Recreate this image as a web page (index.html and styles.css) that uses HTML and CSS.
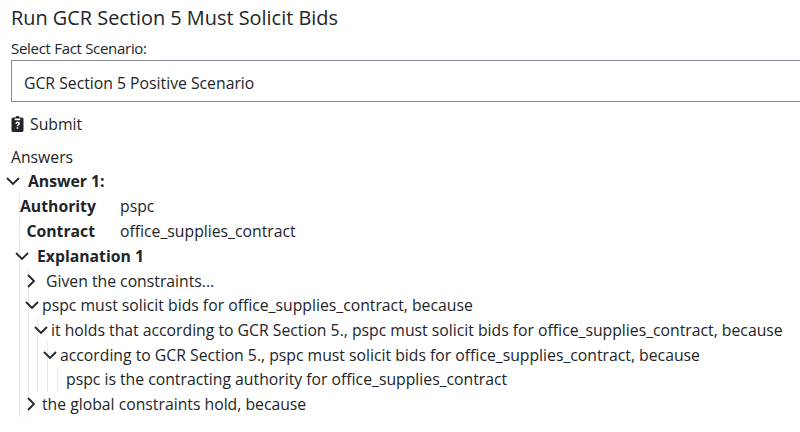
FILE: index.html
```html
<!DOCTYPE html>
<html lang="en">
<head>
  <meta charset="UTF-8">
  <title>Run GCR Section 5 Must Solicit Bids</title>
  <link rel="stylesheet" href="styles.css">
</head>
<body>
  <div class="page">
    <h1>Run GCR Section 5 Must Solicit Bids</h1>
    <label class="field-label">Select Fact Scenario:</label>
    <div class="select">GCR Section 5 Positive Scenario</div>
    <button type="button" class="submit">
      <svg class="submit-icon" viewBox="0 0 12 16"><path fill-rule="evenodd" d="M4 1.500C4 .6 4.900 0 6 0s2 .6 2 1.500h2.200c1 0 1.800.8 1.800 1.800v10.900c0 1-.8 1.800-1.800 1.800H1.800C.8 16 0 15.200 0 14.200V3.300c0-1 .8-1.800 1.800-1.800H4zM3.200 2.600v1.600h5.600V2.600H3.200zM4 8h1.500c0-.8.300-1.100.6-1.100s.6.200.6.600c0 .4-.2.600-.6.900-.6.400-.9.900-.9 1.800h1.500c0-.5.100-.7.600-1 .7-.5 1-1.100 1-1.800 0-1.200-.9-1.900-2.200-1.900C4.800 5.500 4 6.500 4 8zM5.200 11.300v1.500h1.600v-1.500H5.200z"/></svg>
      Submit
    </button>
    <div class="answers-label">Answers</div>

    <div class="tree-row answer-head">
      <svg class="chev" viewBox="0 0 14 14"><path d="M1 4l6 6 6-6"/></svg>
      <strong>Answer 1:</strong>
    </div>
    <div class="branch answer-body">
      <dl class="facts">
        <dt>Authority</dt><dd>pspc</dd>
        <dt>Contract</dt><dd>office_supplies_contract</dd>
      </dl>
      <div class="tree-row explanation-head">
        <svg class="chev" viewBox="0 0 14 14"><path d="M1 4l6 6 6-6"/></svg>
        <strong>Explanation 1</strong>
      </div>
      <div class="branch explanation-body">
        <div class="tree-row given">
          <svg class="chev" viewBox="0 0 14 14"><path d="M4 1l6 6-6 6"/></svg>
          <span>Given the constraints...</span>
        </div>
        <div class="tree-row node">
          <svg class="chev" viewBox="0 0 14 14"><path d="M1 4l6 6 6-6"/></svg>
          <span>pspc must solicit bids for office_supplies_contract, because</span>
        </div>
        <div class="branch level">
          <div class="tree-row node">
            <svg class="chev" viewBox="0 0 14 14"><path d="M1 4l6 6 6-6"/></svg>
            <span>it holds that according to GCR Section 5., pspc must solicit bids for office_supplies_contract, because</span>
          </div>
          <div class="branch level inner">
            <div class="tree-row node">
              <svg class="chev" viewBox="0 0 14 14"><path d="M1 4l6 6 6-6"/></svg>
              <span>according to GCR Section 5., pspc must solicit bids for office_supplies_contract, because</span>
            </div>
            <div class="branch leaf">
              <div class="tree-row">pspc is the contracting authority for office_supplies_contract</div>
            </div>
          </div>
        </div>
        <div class="tree-row node closed">
          <svg class="chev" viewBox="0 0 14 14"><path d="M4 1l6 6-6 6"/></svg>
          <span>the global constraints hold, because</span>
        </div>
      </div>
    </div>
  </div>
</body>
</html>
```

FILE: styles.css
```css
* {
  box-sizing: border-box;
}

html,
body {
  margin: 0;
  height: 432px;
  overflow: hidden;
}

body {
  font-family: 'Open Sans', 'Noto Sans', sans-serif;
  font-size: 15.75px;
  color: #212529;
  background: #fff;
}

.page {
  padding: 5px 0 0 11px;
  width: 820px;
}

h1 {
  margin: 0;
  font-size: 19.9px;
  font-weight: 400;
  line-height: 26px;
}

.field-label {
  display: block;
  margin-top: 6px;
  font-size: 15px;
  letter-spacing: -0.3px;
  line-height: 23px;
}

.select {
  height: 42px;
  padding-left: 12px;
  border: 1px solid #8a8d98;
  line-height: 44px;
}

.submit {
  display: flex;
  align-items: center;
  gap: 6px;
  margin: 10px 0 0;
  padding: 0;
  border: none;
  background: none;
  color: inherit;
  font: inherit;
  line-height: 24px;
}

.submit-icon {
  width: 13px;
  height: 16px;
  fill: #212529;
}

.answers-label {
  margin-top: 9px;
  line-height: 24px;
}

.tree-row {
  display: flex;
  align-items: center;
  height: 24.7px;
  white-space: nowrap;
}

.chev {
  flex: none;
  width: 14px;
  height: 14px;
  fill: none;
  stroke: #212529;
  stroke-width: 1.8;
}

.answer-head {
  margin-left: -5px;
  gap: 8px;
}

.branch {
  border-left: 1px solid #e8e8ee;
}

.answer-body {
  margin-left: 8px;
}

.facts {
  display: grid;
  grid-template-columns: 75px auto;
  column-gap: 25px;
  margin: 0;
  line-height: 25px;
}

.facts dt {
  font-weight: 700;
  text-align: right;
}

.facts dd {
  margin: 0;
}

.explanation-head {
  margin-left: -5px;
  gap: 8px;
}

.explanation-body {
  margin-left: 8px;
}

.given {
  margin-left: -5px;
  gap: 8px;
}

.node {
  margin-left: -4px;
  gap: 3px;
}

.node.closed {
  margin-left: -5px;
  gap: 4px;
}

.level {
  margin-left: 8px;
}

.level.inner {
  margin-left: 9px;
}

.level.inner > .node {
  margin-left: -5px;
}

.leaf {
  margin-left: 9px;
  padding-left: 8px;
}
```
